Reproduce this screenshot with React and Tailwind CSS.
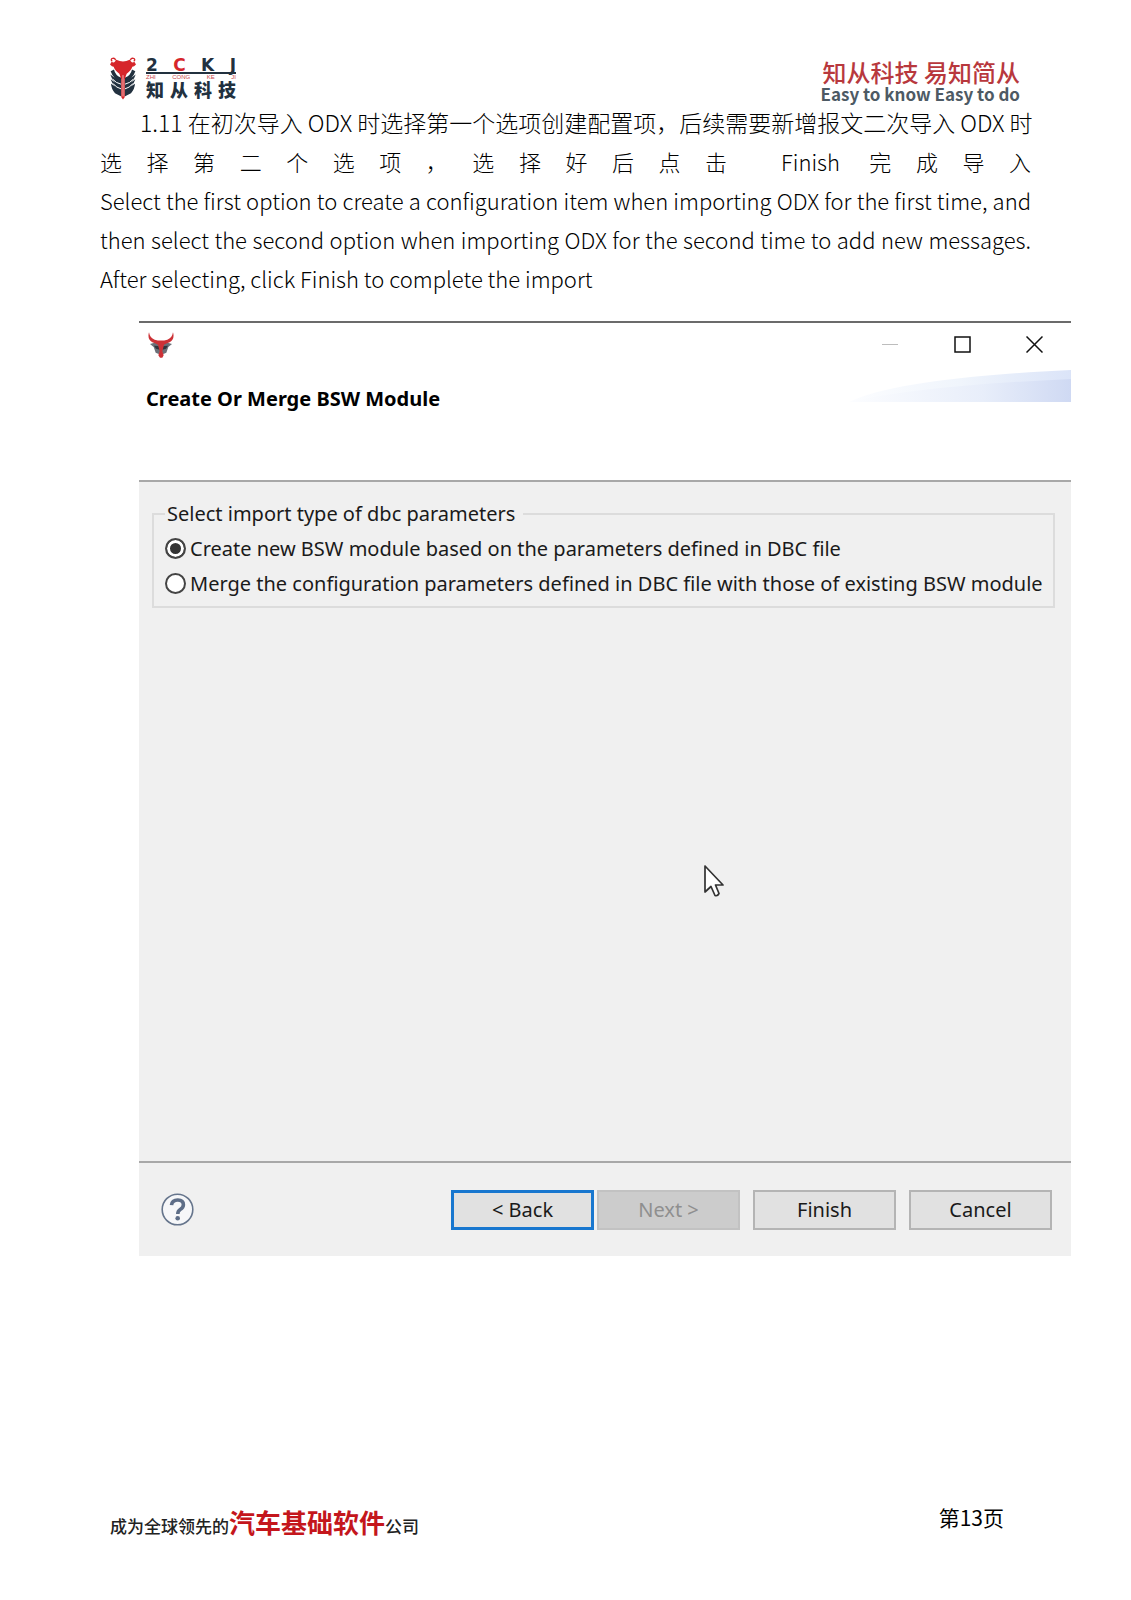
import { useState } from 'react'

const importTypes = [
  { id: 'create', label: 'Create new BSW module based on the parameters defined in DBC file' },
  { id: 'merge', label: 'Merge the configuration parameters defined in DBC file with those of existing BSW module' },
]

function BrandMark() {
  return (
    <svg viewBox="0 0 78 128" className="w-[26px] h-[43px]" aria-hidden="true">
      <g fill="#22313f">
        <path d="M2 42 L12 37 Q16 56 34 62 L34 118 L15 108 Q4 96 3 80 L16 88 Q6 80 2 66 L15 76 Q4 64 1 52 L14 62 Q5 52 2 42Z" />
        <path d="M76 42 L66 37 Q62 56 44 62 L44 118 L63 108 Q74 96 75 80 L62 88 Q72 80 76 66 L63 76 Q74 64 77 52 L64 62 Q73 52 76 42Z" />
      </g>
      <g stroke="#fff" strokeWidth="3" fill="none">
        <path d="M8 66 Q18 78 33 81 M10 80 Q20 92 33 95" />
        <path d="M70 66 Q60 78 45 81 M68 80 Q58 92 45 95" />
      </g>
      <path
        fill="#d6262b"
        d="M19 8 Q39 18 59 8 L63 13 Q67 18 73 14 L78 22 Q72 29 67 29 Q64 40 50 50 L44 66 L44 120 L39 127 L34 120 L34 66 L28 50 Q14 40 11 29 Q6 29 0 22 L5 14 Q11 18 15 13Z"
      />
      <path d="M17 9 Q14 1 6 4 Q1 9 7 12 M61 9 Q64 1 72 4 Q77 9 71 12" fill="none" stroke="#d6262b" strokeWidth="4" />
      <path d="M39 54 V118" stroke="#fff" strokeWidth="2" />
    </svg>
  )
}

function BullIcon() {
  return (
    <svg viewBox="0 0 78 78" className="w-[26px] h-[26px]" aria-hidden="true">
      <path fill="#6b7078" d="M6 36 L27 30 L51 30 L72 36 L61 45 L55 62 L46 66 L39 58 L32 66 L23 62 L17 45Z" />
      <path fill="#2f343c" d="M18 41 L32 42 L35 53 L24 50Z M60 41 L46 42 L43 53 L54 50Z" />
      <path
        fill="#cc3136"
        d="M3 1 Q-3 22 13 31 Q24 35 30 38 L35 58 L31 70 L36 77 L43 77 L47 70 L43 58 L48 38 Q54 35 65 31 Q81 22 75 1 Q72 19 58 23 Q39 28 20 23 Q6 19 3 1Z"
      />
    </svg>
  )
}

function Header() {
  return (
    <header className="flex justify-between pl-[110px] pr-[111px] pt-[57px] h-[103px]">
      <div className="flex gap-[10px]">
        <BrandMark />
        <div className="w-[90px] flex flex-col text-[#22313f]">
          <div className="flex justify-between h-[17px] border-b-2 border-[#22313f] font-['DejaVu_Sans',sans-serif] text-[17px] leading-[17px] font-bold">
            <span>2</span>
            <span className="text-[#d6262b]">C</span>
            <span>K</span>
            <span>J</span>
          </div>
          <div className="flex justify-between font-['Liberation_Sans',sans-serif] text-[6px] leading-[6px] text-[#c8474a]">
            <span>ZHI</span>
            <span>CONG</span>
            <span>KE</span>
            <span>JI</span>
          </div>
          <div className="flex justify-between text-[18px] leading-[18px] font-black">
            <span>知</span>
            <span>从</span>
            <span>科</span>
            <span>技</span>
          </div>
        </div>
      </div>
      <div className="flex flex-col text-right whitespace-nowrap">
        <p className="text-[24px] leading-[29px] font-medium text-[#b8383d]">知从科技 易知简从</p>
        <p className="text-[17px] leading-[16px] font-bold text-[#4d5a64]">Easy to know Easy to do</p>
      </div>
    </header>
  )
}

function Instructions() {
  return (
    <section className="mx-[100px] text-[22px] leading-[39px] font-light text-black">
      <p className="pl-10 text-[23px] [text-align-last:justify] whitespace-nowrap">
        1.11 在初次导入 ODX 时选择第一个选项创建配置项，后续需要新增报文二次导入 ODX 时
      </p>
      <p className="[text-align-last:justify]">选择第二个选项，选择好后点击 Finish 完成导入</p>
      <p className="[text-align-last:justify] whitespace-nowrap">
        Select the first option to create a configuration item when importing ODX for the first time, and
      </p>
      <p className="[text-align-last:justify] whitespace-nowrap">
        then select the second option when importing ODX for the second time to add new messages.
      </p>
      <p>After selecting, click Finish to complete the import</p>
    </section>
  )
}

function TitleBar() {
  return (
    <div className="flex items-start justify-between pl-[9px] pr-7 pt-[9px]">
      <BullIcon />
      <div className="flex gap-[55px] pt-1">
        <button type="button" aria-label="Minimize" disabled>
          <svg viewBox="0 0 17 17" className="w-[17px] h-[17px]">
            <path d="M0 8.5 H16" stroke="#bdbdbd" />
          </svg>
        </button>
        <button type="button" aria-label="Maximize">
          <svg viewBox="0 0 17 17" className="w-[17px] h-[17px]">
            <rect x="1" y="1" width="15" height="15" fill="none" stroke="#111" strokeWidth="1.5" />
          </svg>
        </button>
        <button type="button" aria-label="Close">
          <svg viewBox="0 0 17 17" className="w-[17px] h-[17px]">
            <path d="M0.5 0.5 L16.5 16.5 M16.5 0.5 L0.5 16.5" stroke="#111" strokeWidth="1.5" />
          </svg>
        </button>
      </div>
    </div>
  )
}

function Swoosh() {
  return (
    <svg viewBox="0 0 222 32" className="w-[222px] h-8" aria-hidden="true">
      <defs>
        <linearGradient id="swooshBack">
          <stop offset="0" stopColor="#fcfdff" />
          <stop offset="0.5" stopColor="#f0f5fc" />
          <stop offset="1" stopColor="#dbe4f8" />
        </linearGradient>
        <linearGradient id="swooshFront">
          <stop offset="0" stopColor="#fcfdff" />
          <stop offset="0.6" stopColor="#e8eefa" />
          <stop offset="1" stopColor="#cfd9f3" />
        </linearGradient>
      </defs>
      <path d="M0 32 Q50 8 222 0 V32Z" fill="url(#swooshBack)" />
      <path d="M0 32 Q70 16 222 9 V32Z" fill="url(#swooshFront)" />
    </svg>
  )
}

function Cursor() {
  return (
    <svg viewBox="0 0 20 33" className="absolute left-[565px] top-[383px] w-5 h-[33px]" aria-hidden="true">
      <path
        d="M1 1 V27 L7 21.5 L11 30.5 Q13.5 31.5 15 28.5 L11.5 20 H19Z"
        fill="#fff"
        stroke="#333"
        strokeWidth="1.7"
        strokeLinejoin="round"
      />
    </svg>
  )
}

function Dialog() {
  const [importType, setImportType] = useState('create')

  const plainButton = 'w-[143px] h-10 bg-[#e1e1e1] border-2 border-[#b4b4b4]'

  return (
    <section className="ml-[139px] mr-[60px] mt-[23px] border-t-2 border-[#6b6b6b] font-['Noto_Sans',sans-serif] text-[20px] text-[#1a1a1a]">
      <TitleBar />
      <div className="flex justify-between h-[110px] mt-3">
        <h1 className="pl-[7px] pt-[14px] leading-[30px] text-[20px] font-bold text-black whitespace-nowrap">
          Create Or Merge BSW Module
        </h1>
        <Swoosh />
      </div>

      <div className="relative h-[683px] bg-[#f0f0f0] border-y-2 border-[#a8a8a8] pl-[13px] pr-4 pt-[17px]">
        <fieldset className="border-2 border-[#dcdcdc] pl-[11px] pr-2 pb-[5px]">
          <legend className="pl-[2px] pr-2 mb-[2px] leading-[30px]">Select import type of dbc parameters</legend>
          {importTypes.map(({ id, label }) => (
            <label key={id} className="flex items-center gap-1 h-[35px] whitespace-nowrap">
              <input
                type="radio"
                name="importType"
                value={id}
                checked={importType === id}
                onChange={() => setImportType(id)}
                className="appearance-none shrink-0 w-[21px] h-[21px] rounded-full border-2 border-[#444] bg-white checked:bg-[#333] checked:shadow-[inset_0_0_0_3px_#fff]"
              />
              {label}
            </label>
          ))}
        </fieldset>
        <Cursor />
      </div>

      <div className="flex items-center justify-between h-[93px] bg-[#f0f0f0] pl-[22px] pr-[19px]">
        <button type="button" aria-label="Help">
          <svg viewBox="0 0 33 33" className="w-[33px] h-[33px]">
            <circle cx="16.5" cy="16.5" r="15.3" fill="#f6f7f9" stroke="#66758c" strokeWidth="1.6" />
            <path
              d="M10.5 12.2 Q11 7 16.8 7 Q22.4 7 22.4 11.8 Q22.4 14.6 19.2 16.5 Q16.8 18 16.8 21"
              fill="none"
              stroke="#5d6d87"
              strokeWidth="3.6"
            />
            <circle cx="16.7" cy="25.3" r="2.3" fill="#5d6d87" />
          </svg>
        </button>
        <div className="flex gap-[13px]">
          <div className="flex gap-[3px]">
            <button type="button" className="w-[143px] h-10 bg-[#e1e1e1] border-3 border-[#1877cf]">
              &lt; Back
            </button>
            <button type="button" disabled className="w-[143px] h-10 bg-[#cccccc] border-2 border-[#c2c2c2] text-[#8f8f8f]">
              Next &gt;
            </button>
          </div>
          <button type="button" className={plainButton}>Finish</button>
          <button type="button" className={plainButton}>Cancel</button>
        </div>
      </div>
    </section>
  )
}

export default function App() {
  return (
    <main className="min-h-screen flex flex-col bg-white font-['Noto_Sans_CJK_SC',sans-serif]">
      <Header />
      <Instructions />
      <Dialog />
      <footer className="mt-auto flex items-start justify-between pl-[110px] pr-[127px] pb-[54px]">
        <p className="text-[17px] leading-10 font-medium text-[#222]">
          成为全球领先的<strong className="text-[26px] font-bold text-[#c4161c]">汽车基础软件</strong>公司
        </p>
        <p className="text-[21px] leading-[30px] text-black">第13页</p>
      </footer>
    </main>
  )
}
